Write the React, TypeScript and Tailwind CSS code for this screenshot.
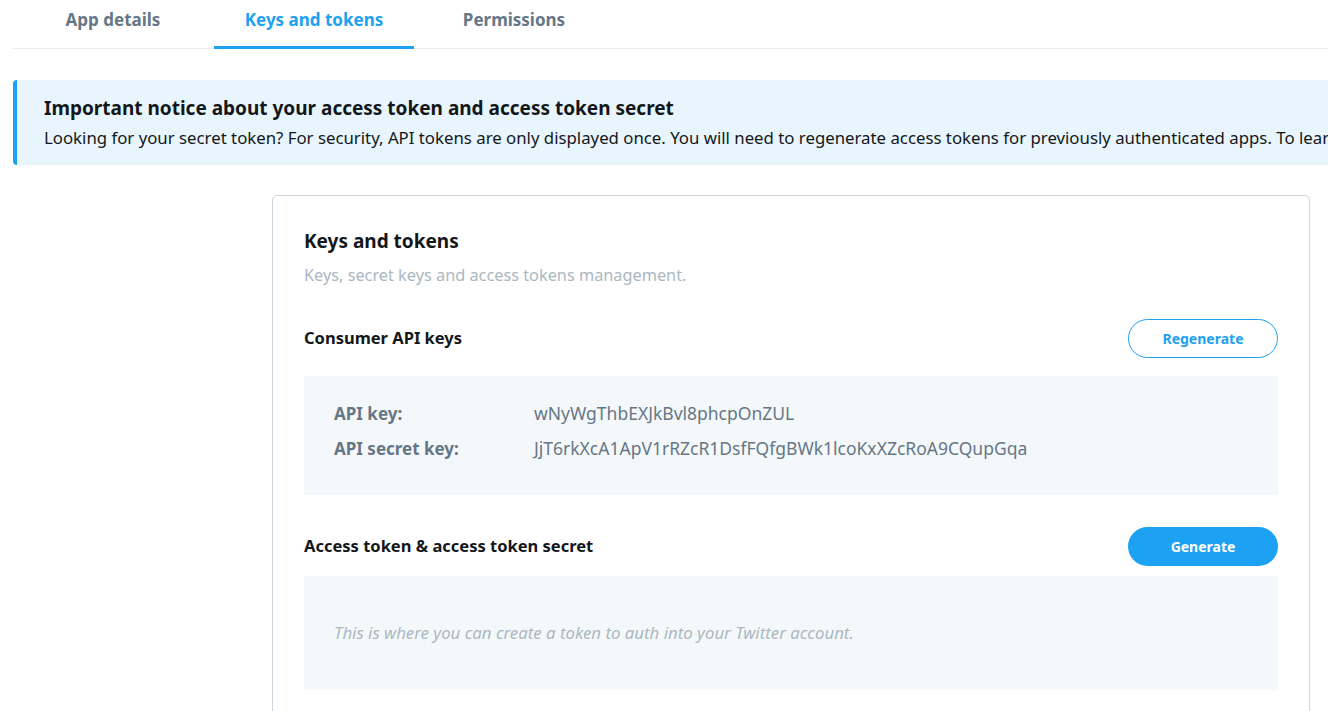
import React from 'react'

const font = { fontFamily: '"Noto Sans", "Open Sans", sans-serif' }

function Tabs() {
  const tabs = ['App details', 'Keys and tokens', 'Permissions']
  return (
    <div className="ml-[13px] flex border-b border-[#e6ecf0]">
      {tabs.map((t, i) => (
        <div
          key={t}
          className={`w-[200px] h-[49px] pb-[6px] flex items-center justify-center text-[17px] font-bold border-b-[3px] -mb-px ${
            i === 1 ? 'text-[#1da1f2] border-[#1da1f2] ml-px' : 'text-[#657786] border-transparent'
          }`}
        >
          {t}
        </div>
      ))}
    </div>
  )
}

export default function App() {
  return (
    <div className="w-[1328px] h-[711px] overflow-hidden bg-white text-[#14171a]" style={font}>
      <Tabs />

      {/* Notice */}
      <div className="ml-[13px] mt-[31px] w-[1500px] h-[85px] rounded-[4px] border-l-4 border-[#1da1f2] bg-[#e8f5fd] pl-[27px] pt-[14px]">
        <h3 className="text-[19px] font-bold leading-[28px] text-[#14171a]">
          Important notice about your access token and access token secret
        </h3>
        <p className="text-[16.8px] leading-[22px] mt-[5px] text-[#14171a] whitespace-nowrap">
          Looking for your secret token? For security, API tokens are only displayed once. You will need to regenerate access tokens for previously authenticated apps. To learn more, visit our documentation.
        </p>
      </div>

      {/* Card */}
      <div className="ml-[272px] mt-[30px] w-[1038px] h-[600px] rounded-[5px] border border-[#ccd6dd] px-[31px] pt-[32px]">
        <h2 className="text-[19px] font-bold leading-[26px]">Keys and tokens</h2>
        <p className="mt-[10px] text-[16.3px] leading-[22px] text-[#aab8c2]">
          Keys, secret keys and access tokens management.
        </p>

        <div className="mt-[32px] flex items-center justify-between h-[40px]">
          <h4 className="text-[16.5px] font-bold">Consumer API keys</h4>
          <button className="w-[150px] h-[39px] rounded-full border border-[#1da1f2] text-[#1da1f2] text-[14px] font-bold">
            Regenerate
          </button>
        </div>
        <div className="mt-[18px] h-[119px] bg-[#f5f8fa] px-[30px] pt-[20px] text-[#657786]">
          <div className="flex h-[35px] items-center">
            <span className="w-[200px] text-[17px] font-bold">API key:</span>
            <span className="text-[17.5px]">wNyWgThbEXJkBvl8phcpOnZUL</span>
          </div>
          <div className="flex h-[35px] items-center">
            <span className="w-[200px] text-[17px] font-bold">API secret key:</span>
            <span className="text-[17.5px]">JjT6rkXcA1ApV1rRZcR1DsfFQfgBWk1lcoKxXZcRoA9CQupGqa</span>
          </div>
        </div>

        <div className="mt-[31px] flex items-center justify-between h-[40px]">
          <h4 className="text-[16.5px] font-bold">Access token &amp; access token secret</h4>
          <button className="w-[150px] h-[39px] rounded-full bg-[#1da1f2] text-white text-[14px] font-bold">
            Generate
          </button>
        </div>
        <div className="mt-[10px] h-[114px] bg-[#f5f8fa] px-[30px] flex items-center text-[16.8px] italic text-[#aab8c2]">
          This is where you can create a token to auth into your Twitter account.
        </div>
      </div>
    </div>
  )
}
